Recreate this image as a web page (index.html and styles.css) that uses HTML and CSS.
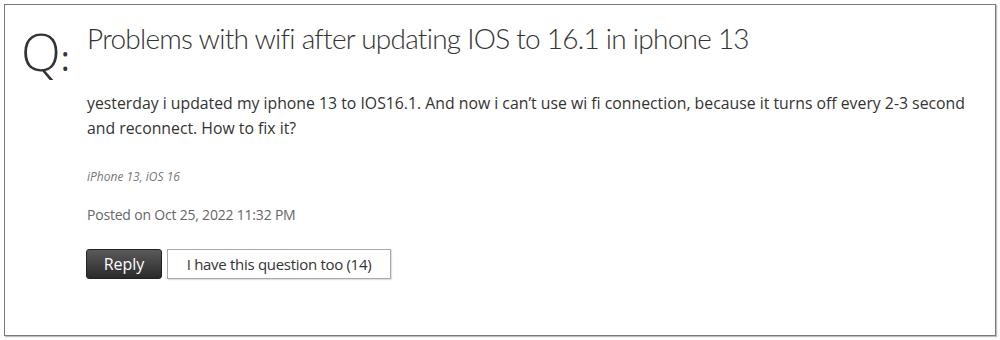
FILE: index.html
```html
<!DOCTYPE html>
<html>
<head>
<meta charset="utf-8">
<link rel="stylesheet" href="styles.css">
</head>
<body>
<div class="card">
  <div class="q">Q<span class="colon">:</span></div>
  <div class="content">
    <h1 class="title">Problems with wifi after updating IOS to 16.1 in iphone 13</h1>
    <p class="text">yesterday i updated my iphone 13 to IOS16.1. And now i can’t use wi fi connection, because it turns off every 2-3 second and reconnect. How to fix it?</p>
    <p class="meta">iPhone 13, iOS 16</p>
    <p class="posted">Posted on Oct 25, 2022 11:32 PM</p>
    <div class="actions">
      <button class="btn reply">Reply</button>
      <button class="btn too">I have this question too (14)</button>
    </div>
  </div>
</div>
</body>
</html>
```

FILE: styles.css
```css
html, body {
  margin: 0;
  padding: 0;
  background: #ffffff;
}
body {
  padding: 4px;
  font-family: "Open Sans", "Liberation Sans", sans-serif;
  color: #333333;
}
.card {
  box-sizing: border-box;
  width: 992px;
  height: 332px;
  border: 1px solid #7a7a7a;
  box-shadow: 1px 1px 1px rgba(0,0,0,0.25);
  display: grid;
  grid-template-columns: 82px 1fr;
  padding-top: 15px;
}
.q {
  padding-left: 16px;
  font-family: "Open Sans", sans-serif;
  font-weight: 300;
  font-size: 52px;
  line-height: 56px;
  color: #333;
  margin-top: 3px;
  letter-spacing: -1px;
}
.colon {
  font-size: 34px;
  font-weight: 400;
  position: relative;
  left: 1px;
}
.content {
  display: flex;
  flex-direction: column;
  align-items: flex-start;
}
.title {
  margin: 0;
  font-family: "Lato", sans-serif;
  font-weight: 300;
  font-size: 28px;
  line-height: 36px;
  letter-spacing: -0.75px;
  color: #333;
}
.text {
  margin: 35px 0 0 0;
  font-size: 15.8px;
  line-height: 25px;
  color: #333;
  width: 885px;
}
.meta {
  margin: 28px 0 0 0;
  font-size: 12px;
  line-height: 16px;
  font-style: italic;
  color: #777;
}
.posted {
  margin: 20px 0 0 0;
  font-size: 14px;
  line-height: 20px;
  letter-spacing: -0.2px;
  color: #666;
}
.actions {
  margin-top: 24px;
  margin-left: -1px;
  display: flex;
  gap: 5px;
}
.btn {
  font-family: "Open Sans", sans-serif;
  font-size: 15px;
  height: 30px;
  padding: 0;
  cursor: pointer;
}
.reply {
  width: 76px;
  font-size: 16px;
  color: #fff;
  border: 1px solid #222;
  border-radius: 3px;
  background: linear-gradient(#5a5a5a, #2a2a2a);
}
.too {
  width: 224px;
  color: #333;
  letter-spacing: -0.3px;
  background: #fff;
  border: 1px solid #a9a9a9;
  box-shadow: 1px 1px 1px rgba(0,0,0,0.12);
}
```
